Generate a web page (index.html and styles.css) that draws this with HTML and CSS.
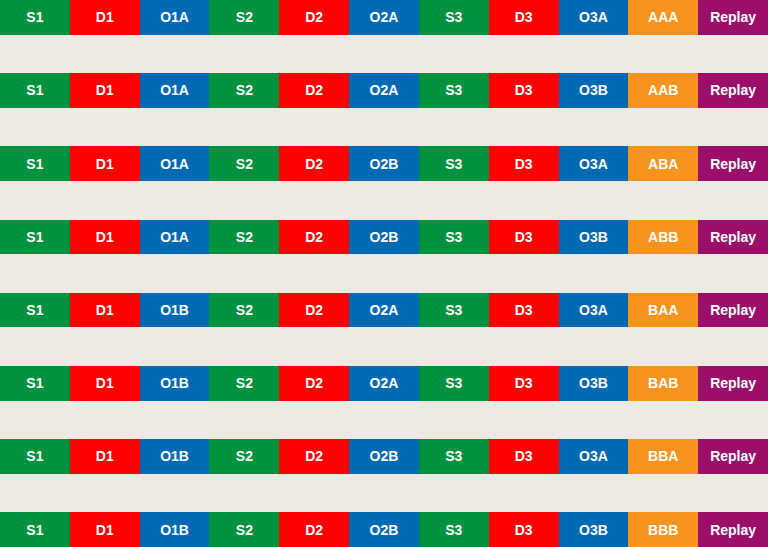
FILE: index.html
```html
<!DOCTYPE html>
<html>
<head>
<meta charset="utf-8">
<link rel="stylesheet" href="styles.css">
</head>
<body>
<div class="board">
  <div class="row"><div class="c s">S1</div><div class="c d">D1</div><div class="c o">O1A</div><div class="c s">S2</div><div class="c d">D2</div><div class="c o">O2A</div><div class="c s">S3</div><div class="c d">D3</div><div class="c o">O3A</div><div class="c r">AAA</div><div class="c p">Replay</div></div>
  <div class="row"><div class="c s">S1</div><div class="c d">D1</div><div class="c o">O1A</div><div class="c s">S2</div><div class="c d">D2</div><div class="c o">O2A</div><div class="c s">S3</div><div class="c d">D3</div><div class="c o">O3B</div><div class="c r">AAB</div><div class="c p">Replay</div></div>
  <div class="row"><div class="c s">S1</div><div class="c d">D1</div><div class="c o">O1A</div><div class="c s">S2</div><div class="c d">D2</div><div class="c o">O2B</div><div class="c s">S3</div><div class="c d">D3</div><div class="c o">O3A</div><div class="c r">ABA</div><div class="c p">Replay</div></div>
  <div class="row"><div class="c s">S1</div><div class="c d">D1</div><div class="c o">O1A</div><div class="c s">S2</div><div class="c d">D2</div><div class="c o">O2B</div><div class="c s">S3</div><div class="c d">D3</div><div class="c o">O3B</div><div class="c r">ABB</div><div class="c p">Replay</div></div>
  <div class="row"><div class="c s">S1</div><div class="c d">D1</div><div class="c o">O1B</div><div class="c s">S2</div><div class="c d">D2</div><div class="c o">O2A</div><div class="c s">S3</div><div class="c d">D3</div><div class="c o">O3A</div><div class="c r">BAA</div><div class="c p">Replay</div></div>
  <div class="row"><div class="c s">S1</div><div class="c d">D1</div><div class="c o">O1B</div><div class="c s">S2</div><div class="c d">D2</div><div class="c o">O2A</div><div class="c s">S3</div><div class="c d">D3</div><div class="c o">O3B</div><div class="c r">BAB</div><div class="c p">Replay</div></div>
  <div class="row"><div class="c s">S1</div><div class="c d">D1</div><div class="c o">O1B</div><div class="c s">S2</div><div class="c d">D2</div><div class="c o">O2B</div><div class="c s">S3</div><div class="c d">D3</div><div class="c o">O3A</div><div class="c r">BBA</div><div class="c p">Replay</div></div>
  <div class="row"><div class="c s">S1</div><div class="c d">D1</div><div class="c o">O1B</div><div class="c s">S2</div><div class="c d">D2</div><div class="c o">O2B</div><div class="c s">S3</div><div class="c d">D3</div><div class="c o">O3B</div><div class="c r">BBB</div><div class="c p">Replay</div></div>
</div>
</body>
</html>
```
FILE: styles.css
```css
html, body {
  margin: 0;
  padding: 0;
  background: #eceae3;
}
.board {
  height: 547px;
  display: flex;
  flex-direction: column;
  justify-content: space-between;
  font-family: "Liberation Sans", Arial, sans-serif;
  font-weight: bold;
  font-size: 14px;
  color: #fff;
}
.row {
  height: 34.5px;
  display: grid;
  grid-template-columns: repeat(11, 1fr);
}
.c {
  display: flex;
  align-items: center;
  justify-content: center;
}
.s { background: #00923f; }
.d { background: #ff0000; }
.o { background: #0069b4; }
.r { background: #f7941d; }
.p { background: #9b0e6a; }
```
